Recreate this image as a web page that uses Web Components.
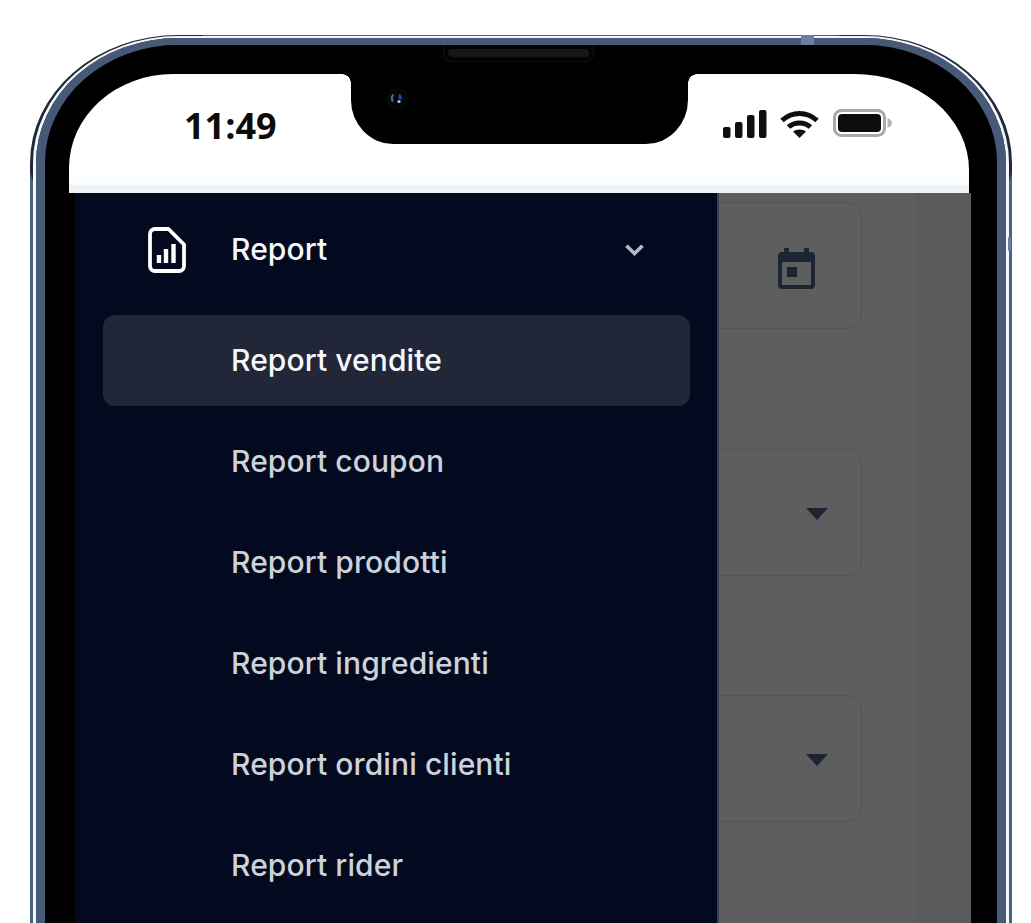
<!DOCTYPE html>
<html lang="it">
<head>
<meta charset="utf-8">
<title>Report</title>
<style>
    html, body { margin: 0; height: 923px; overflow: hidden; background: #fff; }
</style>
</head>
<body>
<phone-frame>
    <status-bar></status-bar>
    <app-screen>
        <form-card><date-icon></date-icon></form-card>
        <form-card><drop-arrow></drop-arrow></form-card>
        <form-card><drop-arrow></drop-arrow></form-card>
        <side-menu slot="drawer">
            <menu-head>Report</menu-head>
            <menu-row active>Report vendite</menu-row>
            <menu-row>Report coupon</menu-row>
            <menu-row>Report prodotti</menu-row>
            <menu-row>Report ingredienti</menu-row>
            <menu-row>Report ordini clienti</menu-row>
            <menu-row>Report rider</menu-row>
        </side-menu>
    </app-screen>
</phone-frame>

<script>
class PhoneFrame extends HTMLElement {
    constructor() {
        super();
        this.attachShadow({ mode: 'open' });
        this.shadowRoot.innerHTML = `
            <style>
                :host { display: block; width: 982px; height: 888px; margin: 35px 0 0 30px; position: relative; }
                .edge, .shine, .metal, .bezel { box-sizing: border-box; height: 100%; }
                .edge {
                    border: 3px solid transparent; border-top-width: 1px; border-bottom: 0;
                    border-radius: 148px 148px 0 0 / 128px 128px 0 0;
                    background: radial-gradient(circle 120px at 115px 105px, #20293a 99%, transparent 100%) border-box,
                                radial-gradient(circle 120px at 867px 105px, #20293a 99%, transparent 100%) border-box,
                                #4a6183 border-box;
                }
                .shine { border: 3px solid #f4f7fb; border-top-width: 2px; border-bottom: 0; border-radius: 145px 145px 0 0 / 127px 127px 0 0; }
                .metal { border: 9px solid #465a78; border-top-width: 7px; border-bottom: 0; border-radius: 142px 142px 0 0 / 125px 125px 0 0; }
                .bezel { background: #000; padding: 29px 27px 0 24px; border-radius: 133px 133px 0 0 / 118px 118px 0 0; }
                .speaker { position: absolute; left: 413px; top: 10px; width: 151px; height: 17px; box-sizing: border-box; background: #030303; border: 1px solid #101010; border-top: 0; border-radius: 0 0 8px 8px; display: flex; align-items: center; justify-content: center; }
                .speaker i { display: block; width: 141px; height: 8px; border-radius: 4px; background: #171717; }
                .tick { position: absolute; background: #6a7fa3; }
                .tick.top { left: 771px; top: 0; width: 13px; height: 10px; }
                .tick.side { right: 1px; top: 202px; width: 3px; height: 14px; }
            </style>
            <div class="edge"><div class="shine"><div class="metal"><div class="bezel"><slot></slot></div></div></div></div>
            <div class="speaker"><i></i></div>
            <div class="tick top"></div>
            <div class="tick side"></div>
        `;
    }
}
customElements.define('phone-frame', PhoneFrame);

class StatusBar extends HTMLElement {
    constructor() {
        super();
        this.attachShadow({ mode: 'open' });
        this.shadowRoot.innerHTML = `
            <style>
                :host { display: block; position: relative; width: 900px; height: 119px; box-sizing: border-box; background: linear-gradient(#fff 0, #fff 101px, #fcfdfe 101px, #fcfdfe 111px, #eff3f8 111px); border-radius: 104px 115px 0 0 / 94px 96px 0 0; }
                .time { position: absolute; left: 115px; top: 30px; font: 700 36px/44px "Open Sans", sans-serif; color: #0b0b0b; }
                .notch { position: absolute; left: 282px; top: 0; width: 337px; height: 70px; background: #000; border-radius: 0 0 42px 42px / 0 0 44px 44px; }
                .notch::before, .notch::after { content: ""; position: absolute; top: 0; width: 9px; height: 9px; }
                .notch::before { left: -9px; background: radial-gradient(circle at 0 100%, transparent 8.5px, #000 9px); }
                .notch::after { right: -9px; background: radial-gradient(circle at 100% 100%, transparent 8.5px, #000 9px); }
                .camera { position: absolute; left: 33px; top: 12px; }
                .signal { position: absolute; left: 654px; top: 36px; }
                .wifi { position: absolute; left: 711px; top: 35px; }
                .battery { position: absolute; left: 764px; top: 35px; }
            </style>
            <div class="time">11:49</div>
            <div class="notch">
                <svg class="camera" width="26" height="26" viewBox="0 0 26 26">
                    <circle cx="13" cy="13" r="11" fill="#04060c"/>
                    <path d="M9.500 8.500a5.500 5.500 0 0 0-.5 7" fill="none" stroke="#2f6f78" stroke-width="2.400"/>
                    <path d="M15 7.500a6 6 0 0 1 2.500 6.500l-3-1z" fill="#1d45c8"/>
                    <circle cx="15" cy="15.500" r="1.600" fill="#b9c4d8"/>
                </svg>
            </div>
            <svg class="signal" width="44" height="28" viewBox="0 0 44 28" fill="#0f0f0f">
                <rect x="0" y="17" width="7.500" height="11" rx="2"/>
                <rect x="12" y="12" width="7.500" height="16" rx="2"/>
                <rect x="24" y="5" width="7.500" height="23" rx="2"/>
                <rect x="36" y="0" width="7.500" height="28" rx="2"/>
            </svg>
            <svg class="wifi" width="39" height="29" viewBox="0 0 39 29" fill="none" stroke="#0f0f0f" stroke-width="5">
                <path d="M2 11.500C12 2 27 2 37 11.500"/>
                <path d="M8.500 18C14.500 12.500 24.500 12.500 30.500 18"/>
                <path d="M19.500 29l-6.500-6.500c3.500-2.800 9.500-2.800 13 0z" fill="#0f0f0f" stroke="none"/>
            </svg>
            <svg class="battery" width="60" height="28" viewBox="0 0 60 28">
                <rect x="1.500" y="1.500" width="50" height="25" rx="7" fill="#fff" stroke="#a9a9a9" stroke-width="3"/>
                <rect x="5" y="5" width="43" height="18" rx="4" fill="#0c0c0c"/>
                <path d="M54.500 9c3 1 4.500 3 4.500 5s-1.500 4-4.500 5z" fill="#b5b5b5"/>
            </svg>
        `;
    }
}
customElements.define('status-bar', StatusBar);

class AppScreen extends HTMLElement {
    constructor() {
        super();
        this.attachShadow({ mode: 'open' });
        this.shadowRoot.innerHTML = `
            <style>
                :host { display: block; position: relative; margin-left: 6px; width: 896px; height: 730px; overflow: hidden; background: #5e5e5e; }
                .main { box-sizing: border-box; width: 842px; height: 100%; padding: 9px 54px 0 0; display: flex; flex-direction: column; gap: 119.5px; border-right: 1px solid #56595b; }
                .strip { position: absolute; top: 0; right: 0; bottom: 0; width: 54px; background: #595b5d; }
            </style>
            <div class="main"><slot></slot></div>
            <div class="strip"></div>
            <slot name="drawer"></slot>
        `;
    }
}
customElements.define('app-screen', AppScreen);

class FormCard extends HTMLElement {
    constructor() {
        super();
        this.attachShadow({ mode: 'open' });
        this.shadowRoot.innerHTML = `
            <style>
                :host { display: flex; box-sizing: border-box; height: 127px; border: 1px solid #50555d; border-radius: 14px; align-items: center; justify-content: flex-end; padding-right: 33px; }
            </style>
            <slot></slot>
        `;
    }
}
customElements.define('form-card', FormCard);

class DateIcon extends HTMLElement {
    constructor() {
        super();
        this.attachShadow({ mode: 'open' });
        this.shadowRoot.innerHTML = `
            <style>
                :host { display: block; width: 37px; height: 41px; margin: 6px 13px 0 0; }
                svg { display: block; }
            </style>
            <svg width="37" height="41" viewBox="0 0 37 41" fill="#1d2533">
                <rect x="6" y="0" width="5" height="6"/>
                <rect x="26" y="0" width="5" height="6"/>
                <path fill-rule="evenodd" d="M4 4h29a4 4 0 0 1 4 4v29a4 4 0 0 1-4 4H4a4 4 0 0 1-4-4V8a4 4 0 0 1 4-4zM4 14v23h29V14z"/>
                <rect x="9" y="19" width="10" height="10"/>
            </svg>
        `;
    }
}
customElements.define('date-icon', DateIcon);

class DropArrow extends HTMLElement {
    constructor() {
        super();
        this.attachShadow({ mode: 'open' });
        this.shadowRoot.innerHTML = `
            <style>
                :host { display: block; width: 22px; height: 12px; margin-top: 3px; }
                svg { display: block; }
            </style>
            <svg width="22" height="12" viewBox="0 0 22 12"><path d="M0 0h22L11 12z" fill="#1d2533"/></svg>
        `;
    }
}
customElements.define('drop-arrow', DropArrow);

class SideMenu extends HTMLElement {
    constructor() {
        super();
        this.attachShadow({ mode: 'open' });
        this.shadowRoot.innerHTML = `
            <style>
                :host { display: block; position: absolute; left: 0; top: 0; bottom: 0; width: 644px; box-sizing: border-box; background: #030a1f; border-right: 2px solid #333f57; padding: 11px 27px 0 28px; font: 500 30px/36px Inter, sans-serif; letter-spacing: 0.1px; }
                .list { display: flex; flex-direction: column; gap: 10px; }
            </style>
            <div class="list"><slot></slot></div>
        `;
    }
}
customElements.define('side-menu', SideMenu);

class MenuHead extends HTMLElement {
    constructor() {
        super();
        this.attachShadow({ mode: 'open' });
        this.shadowRoot.innerHTML = `
            <style>
                :host { display: flex; align-items: center; box-sizing: border-box; height: 91px; margin-bottom: 10px; padding: 0 46px 0 45px; color: #f6f7f9; }
                .file { flex: none; width: 38px; height: 46px; margin-right: 45px; }
                .text { flex: 1; margin-bottom: 2px; }
                .chev { flex: none; }
                svg { display: block; }
            </style>
            <svg class="file" viewBox="0 0 38 46" fill="none" stroke="#fff" stroke-width="3.800" stroke-linejoin="round">
                <path d="M7 2H20.500L36 17.500V39a5 5 0 0 1-5 5H7a5 5 0 0 1-5-5V7a5 5 0 0 1 5-5z"/>
                <path d="M11 36V28M18 36V22M25.500 36V17" stroke-width="4.400"/>
            </svg>
            <span class="text"><slot></slot></span>
            <svg class="chev" width="19" height="12" viewBox="0 0 19 12" fill="none" stroke="#b0bccd" stroke-width="3.600"><path d="M1.500 1.800L9.500 9.500L17.500 1.800"/></svg>
        `;
    }
}
customElements.define('menu-head', MenuHead);

class MenuRow extends HTMLElement {
    constructor() {
        super();
        this.attachShadow({ mode: 'open' });
        this.shadowRoot.innerHTML = `
            <style>
                :host { display: flex; align-items: center; box-sizing: border-box; height: 91px; padding: 0 0 2px 128px; border-radius: 12px; color: #cdd2d9; }
                :host([active]) { background: #212738; color: #f6f7f9; }
            </style>
            <slot></slot>
        `;
    }
}
customElements.define('menu-row', MenuRow);
</script>
</body>
</html>
